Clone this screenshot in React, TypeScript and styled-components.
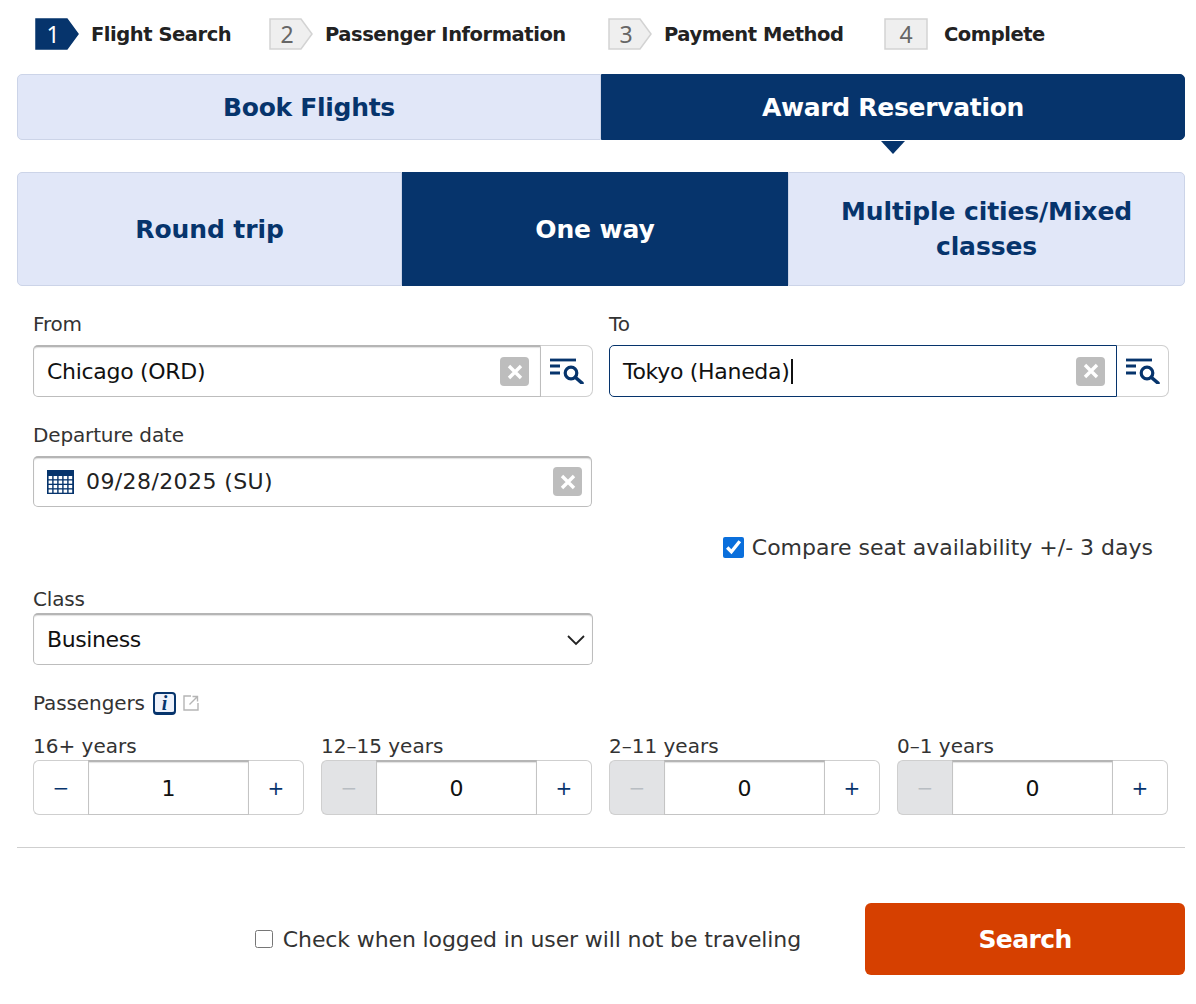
import React from "react";
import styled, { createGlobalStyle } from "styled-components";

const FONT = `"DejaVu Sans", "Liberation Sans", sans-serif`;
const NAVY = "#06346c";

const GlobalStyle = createGlobalStyle`
  html, body {
    margin: 0;
    padding: 0;
    background: #fff;
  }
  * {
    box-sizing: border-box;
  }
  body {
    font-family: ${FONT};
    color: #222;
  }
`;

const steps = [
  { n: "1", label: "Flight Search", active: true, width: 234 },
  { n: "2", label: "Passenger Information", width: 339 },
  { n: "3", label: "Payment Method", width: 276 },
  { n: "4", label: "Complete", last: true },
];

const passengers = [
  { label: "16+ years", value: "1", minusOff: false },
  { label: "12–15 years", value: "0", minusOff: true },
  { label: "2–11 years", value: "0", minusOff: true },
  { label: "0–1 years", value: "0", minusOff: true },
];

function StepBadge({ n, active, last }: { n: string; active?: boolean; last?: boolean }) {
  const fill = active ? NAVY : "#efefef";
  const stroke = active ? NAVY : "#d3d3d3";
  const points = last ? "1,1 43,1 43,31 1,31" : "1,1 32,1 43,16 32,31 1,31";
  return (
    <BadgeWrap>
      <svg width="44" height="32" viewBox="0 0 44 32">
        <polygon points={points} fill={fill} stroke={stroke} strokeWidth="1.5" />
      </svg>
      <BadgeNumber $active={active} $last={last}>{n}</BadgeNumber>
    </BadgeWrap>
  );
}

function ClearIcon() {
  return (
    <ClearBox>
      <svg width="16" height="16" viewBox="0 0 16 16">
        <path d="M2 2 L14 14 M14 2 L2 14" stroke="#fff" strokeWidth="3.4" />
      </svg>
    </ClearBox>
  );
}

function ListSearchIcon() {
  return (
    <svg width="36" height="26" viewBox="0 0 36 26">
      <path d="M1 2 H27" stroke={NAVY} strokeWidth="2.8" />
      <path d="M1 8 H11 M1 15 H11" stroke={NAVY} strokeWidth="3" />
      <circle cx="22" cy="15" r="5.8" fill="none" stroke={NAVY} strokeWidth="3.2" />
      <path d="M26.5 19.5 L33 25" stroke={NAVY} strokeWidth="3.6" strokeLinecap="round" />
    </svg>
  );
}

function CalendarIcon() {
  const cells = [];
  for (let r = 0; r < 4; r++) {
    for (let c = 0; c < 5; c++) {
      cells.push(<rect key={`${r}-${c}`} x={1.6 + c * 5} y={6 + r * 4.5} width="3.6" height="3.2" fill="#fff" />);
    }
  }
  return (
    <CalendarSvg width="27" height="24" viewBox="0 0 27 24">
      <rect width="27" height="24" fill={NAVY} />
      {cells}
    </CalendarSvg>
  );
}

function InfoIcon() {
  return (
    <InfoBox>
      <i>i</i>
    </InfoBox>
  );
}

function ExternalIcon() {
  return (
    <svg width="18" height="18" viewBox="0 0 18 18">
      <path d="M9 2 H2 V16 H16 V9" fill="none" stroke="#b5b5b5" strokeWidth="1.4" />
      <path d="M7.5 10.5 L15 3 M10.5 2.5 H15.5 V7.5" fill="none" stroke="#b5b5b5" strokeWidth="1.4" />
    </svg>
  );
}

function Chevron() {
  return (
    <svg width="20" height="12" viewBox="0 0 20 12">
      <path d="M2 2 L10 10 L18 2" fill="none" stroke="#222" strokeWidth="1.8" />
    </svg>
  );
}

export default function App() {
  return (
    <Page>
      <GlobalStyle />
      <Stepper>
        {steps.map((s) => (
          <Step key={s.n} $width={s.width}>
            <StepBadge n={s.n} active={s.active} last={s.last} />
            <StepLabel $last={s.last}>{s.label}</StepLabel>
          </Step>
        ))}
      </Stepper>

      <MainTabs>
        <MainTab $first>Book Flights</MainTab>
        <MainTab $active>Award Reservation</MainTab>
      </MainTabs>

      <TripTabs>
        <TripTab $first>Round trip</TripTab>
        <TripTab $active>One way</TripTab>
        <TripTab $last>Multiple cities/Mixed classes</TripTab>
      </TripTabs>

      <Form>
        <TwoCols>
          <div>
            <Label>From</Label>
            <AirportRow>
              <AirportInput>
                <span>Chicago (ORD)</span>
                <ClearIcon />
              </AirportInput>
              <LookupButton><ListSearchIcon /></LookupButton>
            </AirportRow>
          </div>
          <div>
            <Label>To</Label>
            <AirportRow>
              <AirportInput $focused>
                <span>Tokyo (Haneda)<Caret /></span>
                <ClearIcon />
              </AirportInput>
              <LookupButton><ListSearchIcon /></LookupButton>
            </AirportRow>
          </div>
        </TwoCols>

        <DateBlock>
          <Label>Departure date</Label>
          <DateInput>
            <CalendarIcon />
            <DateText>09/28/2025 (SU)</DateText>
            <ClearIcon />
          </DateInput>
        </DateBlock>

        <CompareRow>
          <CompareCheck type="checkbox" defaultChecked />
          <span>Compare seat availability +/- 3 days</span>
        </CompareRow>

        <ClassBlock>
          <Label>Class</Label>
          <SelectBox>
            <span>Business</span>
            <Chevron />
          </SelectBox>
        </ClassBlock>

        <PassengersTitle>
          <span>Passengers</span>
          <InfoIcon />
          <ExternalIcon />
        </PassengersTitle>

        <PassengerGrid>
          {passengers.map((p) => (
            <div key={p.label}>
              <SmallLabel>{p.label}</SmallLabel>
              <Counter>
                <CounterButton $off={p.minusOff}>−</CounterButton>
                <CounterValue>{p.value}</CounterValue>
                <CounterButton $plus>+</CounterButton>
              </Counter>
            </div>
          ))}
        </PassengerGrid>
      </Form>

      <Divider />

      <Footer>
        <NotTraveling>
          <FooterCheck type="checkbox" />
          <span>Check when logged in user will not be traveling</span>
        </NotTraveling>
        <SearchButton>Search</SearchButton>
      </Footer>
    </Page>
  );
}

const Page = styled.div`
  width: 1196px;
  height: 1004px;
  padding: 18px 11px 0 17px;
  overflow: hidden;
`;

const Stepper = styled.div`
  display: flex;
  align-items: center;
  height: 32px;
  padding-left: 18px;
`;

const Step = styled.div<{ $width?: number }>`
  display: flex;
  align-items: center;
  flex: none;
  width: ${(p) => (p.$width ? `${p.$width}px` : "auto")};
`;

const BadgeWrap = styled.div`
  position: relative;
  width: 44px;
  height: 32px;
  flex: none;
  svg {
    display: block;
  }
`;

const BadgeNumber = styled.span<{ $active?: boolean; $last?: boolean }>`
  position: absolute;
  top: 0;
  left: 0;
  width: ${(p) => (p.$last ? "44px" : "36px")};
  line-height: 32px;
  text-align: center;
  font-family: "Noto Sans", sans-serif;
  font-size: 23px;
  color: ${(p) => (p.$active ? "#fff" : "#666")};
`;

const StepLabel = styled.span<{ $last?: boolean }>`
  margin-left: ${(p) => (p.$last ? "16px" : "12px")};
  font-size: 19.5px;
  font-weight: 700;
  letter-spacing: -0.45px;
  white-space: nowrap;
  color: #222;
`;

const MainTabs = styled.div`
  display: grid;
  grid-template-columns: 584px 584px;
  margin-top: 24px;
  height: 66px;
  position: relative;
`;

const MainTab = styled.div<{ $active?: boolean; $first?: boolean }>`
  position: relative;
  display: flex;
  align-items: center;
  justify-content: center;
  font-size: 25px;
  font-weight: 700;
  letter-spacing: -0.3px;
  background: ${(p) => (p.$active ? NAVY : "#e1e7f8")};
  color: ${(p) => (p.$active ? "#fff" : NAVY)};
  border: 1px solid ${(p) => (p.$active ? NAVY : "#ccd4e8")};
  border-radius: ${(p) => (p.$first ? "5px 0 0 5px" : "0 5px 5px 0")};
  ${(p) =>
    p.$active &&
    `
    &::after {
      content: "";
      position: absolute;
      left: 50%;
      top: 66px;
      margin-left: -12px;
      border-left: 12px solid transparent;
      border-right: 12px solid transparent;
      border-top: 13px solid ${NAVY};
    }
  `}
`;

const TripTabs = styled.div`
  display: grid;
  grid-template-columns: 385px 386px 397px;
  margin-top: 32px;
  height: 114px;
`;

const TripTab = styled.div<{ $active?: boolean; $first?: boolean; $last?: boolean }>`
  display: flex;
  align-items: center;
  justify-content: center;
  padding: 0 30px;
  text-align: center;
  font-size: 25px;
  line-height: 35px;
  font-weight: 700;
  letter-spacing: -0.1px;
  background: ${(p) => (p.$active ? NAVY : "#e1e7f8")};
  color: ${(p) => (p.$active ? "#fff" : NAVY)};
  border: 1px solid ${(p) => (p.$active ? NAVY : "#ccd4e8")};
  border-radius: ${(p) => (p.$first ? "5px 0 0 5px" : p.$last ? "0 5px 5px 0" : "0")};
`;

const Form = styled.div`
  padding: 24px 16px 0;
`;

const TwoCols = styled.div`
  display: grid;
  grid-template-columns: 560px 560px;
  column-gap: 16px;
`;

const Label = styled.div`
  font-size: 20px;
  line-height: 28px;
  height: 35px;
  letter-spacing: -0.15px;
  color: #333;
`;

const AirportRow = styled.div`
  display: flex;
  height: 52px;
`;

const AirportInput = styled.div<{ $focused?: boolean }>`
  flex: none;
  width: 508px;
  display: flex;
  align-items: center;
  justify-content: space-between;
  padding: 0 11px 0 13px;
  font-size: 22px;
  letter-spacing: -0.3px;
  color: #111;
  border: 1px solid ${(p) => (p.$focused ? NAVY : "#bdbdbd")};
  border-top: ${(p) => (p.$focused ? `1px solid ${NAVY}` : "2px solid #b5b5b5")};
  border-radius: 5px 0 0 5px;
  box-shadow: ${(p) => (p.$focused ? "none" : "inset 0 1px 1px rgba(0, 0, 0, 0.12)")};
`;

const Caret = styled.span`
  display: inline-block;
  width: 2px;
  height: 25px;
  margin-left: 1px;
  background: #111;
  vertical-align: -5px;
`;

const ClearBox = styled.span`
  flex: none;
  display: flex;
  align-items: center;
  justify-content: center;
  width: 29px;
  height: 29px;
  border-radius: 4px;
  background: #bdbdbd;
`;

const LookupButton = styled.div`
  flex: none;
  width: 52px;
  display: flex;
  align-items: center;
  justify-content: center;
  border: 1px solid #cfcfcf;
  border-left: none;
  border-radius: 0 7px 7px 0;
`;

const DateBlock = styled.div`
  margin-top: 24px;
  width: 559px;
`;

const DateInput = styled.div`
  display: flex;
  align-items: center;
  height: 51px;
  padding: 0 9px 1px 13px;
  font-size: 22px;
  color: #222;
  border: 1px solid #bdbdbd;
  border-top: 2px solid #b5b5b5;
  border-radius: 5px;
  box-shadow: inset 0 1px 1px rgba(0, 0, 0, 0.12);
`;

const CalendarSvg = styled.svg`
  flex: none;
`;

const DateText = styled.span`
  flex: 1;
  margin-left: 12px;
  letter-spacing: 0.4px;
`;

const CompareRow = styled.label`
  display: flex;
  align-items: center;
  justify-content: flex-end;
  margin-top: 27px;
  padding-right: 16px;
  height: 26px;
  font-size: 22px;
  color: #333;
`;

const CompareCheck = styled.input`
  width: 21px;
  height: 21px;
  margin: 0 8px 0 0;
  accent-color: #0a6fdc;
`;

const ClassBlock = styled.div`
  margin-top: 25px;
  width: 560px;
`;

const SelectBox = styled.div`
  display: flex;
  align-items: center;
  justify-content: space-between;
  height: 52px;
  margin-top: -7px;
  padding: 0 6px 0 13px;
  font-size: 22px;
  letter-spacing: -0.4px;
  color: #111;
  border: 1px solid #bdbdbd;
  border-top: 2px solid #b5b5b5;
  border-radius: 5px;
  box-shadow: inset 0 1px 1px rgba(0, 0, 0, 0.12);
`;

const PassengersTitle = styled.div`
  display: flex;
  align-items: center;
  gap: 6px;
  margin-top: 25px;
  height: 26px;
  font-size: 20px;
  letter-spacing: -0.1px;
  color: #333;
`;

const InfoBox = styled.span`
  display: flex;
  align-items: center;
  justify-content: center;
  width: 23px;
  height: 23px;
  margin-left: 2px;
  border: 2px solid ${NAVY};
  border-bottom-width: 3px;
  border-radius: 4px;
  background: #eef2fb;
  i {
    font-family: "Liberation Serif", serif;
    font-size: 20px;
    font-weight: 700;
    line-height: 1;
    color: ${NAVY};
  }
`;

const PassengerGrid = styled.div`
  display: grid;
  grid-template-columns: repeat(4, 271px);
  column-gap: 17px;
  margin-top: 18px;
`;

const SmallLabel = styled.div`
  font-size: 20px;
  line-height: 24px;
  height: 26px;
  letter-spacing: 0;
  color: #333;
  white-space: nowrap;
`;

const Counter = styled.div`
  display: flex;
  height: 55px;
`;

const CounterButton = styled.div<{ $off?: boolean; $plus?: boolean }>`
  flex: none;
  width: ${(p) => (p.$plus ? "55px" : "55px")};
  margin-left: ${(p) => (p.$plus ? "0" : "0")};
  display: flex;
  align-items: center;
  justify-content: center;
  font-size: 20px;
  color: ${(p) => (p.$off ? "#b8bdc2" : NAVY)};
  background: ${(p) => (p.$off ? "#e2e3e5" : "#fff")};
  border: 1px solid #cfcfcf;
  border-${(p) => (p.$plus ? "left" : "right")}: none;
  border-radius: ${(p) => (p.$plus ? "0 6px 6px 0" : "6px 0 0 6px")};
`;

const CounterValue = styled.div`
  flex: 1;
  display: flex;
  align-items: center;
  justify-content: center;
  font-size: 22px;
  color: #111;
  border: 1px solid #c4c4c4;
  border-top: 2px solid #b5b5b5;
  box-shadow: inset 0 1px 1px rgba(0, 0, 0, 0.12);
`;

const Divider = styled.div`
  margin-top: 32px;
  height: 1px;
  background: #cfcfcf;
  width: 1168px;
`;

const Footer = styled.div`
  display: flex;
  align-items: center;
  justify-content: flex-end;
  width: 1168px;
  margin-top: 55px;
  gap: 64px;
`;

const NotTraveling = styled.label`
  display: flex;
  align-items: center;
  font-size: 22px;
  letter-spacing: -0.12px;
  color: #333;
`;

const FooterCheck = styled.input`
  width: 18px;
  height: 18px;
  margin: 0 10px 0 0;
`;

const SearchButton = styled.div`
  width: 320px;
  height: 72px;
  display: flex;
  align-items: center;
  justify-content: center;
  font-size: 25px;
  font-weight: 700;
  letter-spacing: -0.6px;
  color: #fff;
  background: #d64000;
  border-radius: 6px;
`;
